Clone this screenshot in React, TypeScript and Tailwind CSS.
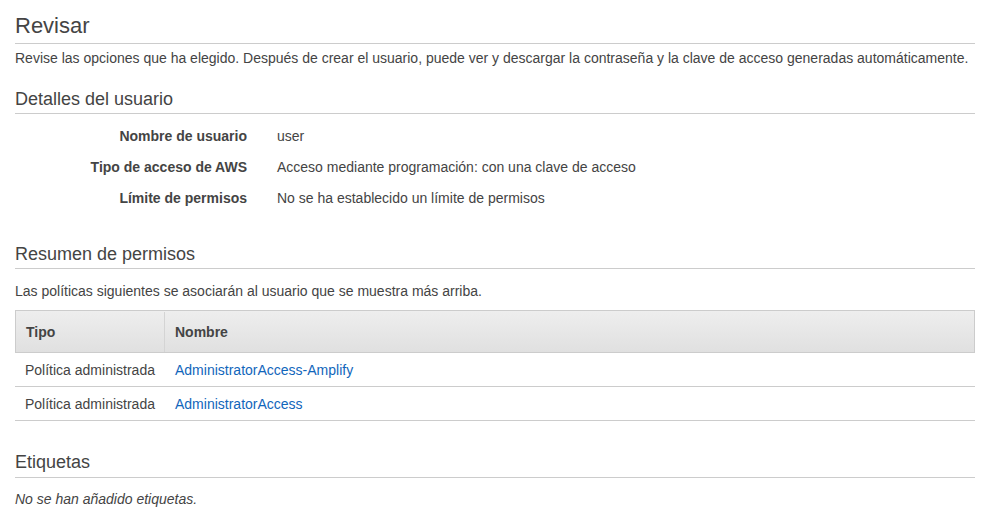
export default function App() {
  const details = [
    { label: "Nombre de usuario", value: "user" },
    { label: "Tipo de acceso de AWS", value: "Acceso mediante programación: con una clave de acceso" },
    { label: "Límite de permisos", value: "No se ha establecido un límite de permisos" },
  ];

  const policies = [
    { tipo: "Política administrada", nombre: "AdministratorAccess-Amplify" },
    { tipo: "Política administrada", nombre: "AdministratorAccess" },
  ];

  return (
    <div
      className="min-h-screen bg-white px-[15px] text-[14px] leading-[20px] text-[#444]"
      style={{ fontFamily: '"Liberation Sans", Arial, sans-serif' }}
    >
      <div className="w-[960px]">
        {/* Title */}
        <h1 className="border-b border-[#ccc] pt-[13px] pb-[4px] text-[22px] leading-[26px] font-normal">
          Revisar
        </h1>
        <p className="mt-[4px]">
          Revise las opciones que ha elegido. Después de crear el usuario, puede ver y descargar la contraseña y la clave de acceso generadas automáticamente.
        </p>

        {/* User details */}
        <h2 className="mt-[21px] border-b border-[#ccc] pb-[4px] text-[18px] leading-[20px] font-normal">
          Detalles del usuario
        </h2>
        <div className="mt-[7px]">
          {details.map((d) => (
            <div key={d.label} className="flex leading-[31px]">
              <div className="w-[232px] text-right font-bold">{d.label}</div>
              <div className="pl-[30px]">{d.value}</div>
            </div>
          ))}
        </div>

        {/* Permissions summary */}
        <h2 className="mt-[30px] border-b border-[#ccc] pb-[4px] text-[18px] leading-[20px] font-normal">
          Resumen de permisos
        </h2>
        <p className="mt-[12px]">Las políticas siguientes se asociarán al usuario que se muestra más arriba.</p>

        <div className="mt-[9px]">
          <div className="flex border border-[#ccc] bg-gradient-to-b from-[#eeeeee] to-[#e0e0e0] pt-[1px] font-bold leading-[40px]">
            <div className="w-[149px] border-r border-[#d4d4d4] pl-[10px]">Tipo</div>
            <div className="pl-[10px]">Nombre</div>
          </div>
          {policies.map((p) => (
            <div key={p.nombre} className="flex border-b border-[#ccc] pt-[1px] leading-[32px]">
              <div className="w-[150px] pl-[10px]">{p.tipo}</div>
              <a href="#" className="pl-[10px] text-[#1166bb]">
                {p.nombre}
              </a>
            </div>
          ))}
        </div>

        {/* Tags */}
        <h2 className="mt-[31px] border-b border-[#ccc] pb-[5px] text-[18px] leading-[20px] font-normal">
          Etiquetas
        </h2>
        <p className="mt-[11px] italic">No se han añadido etiquetas.</p>
      </div>
    </div>
  );
}
